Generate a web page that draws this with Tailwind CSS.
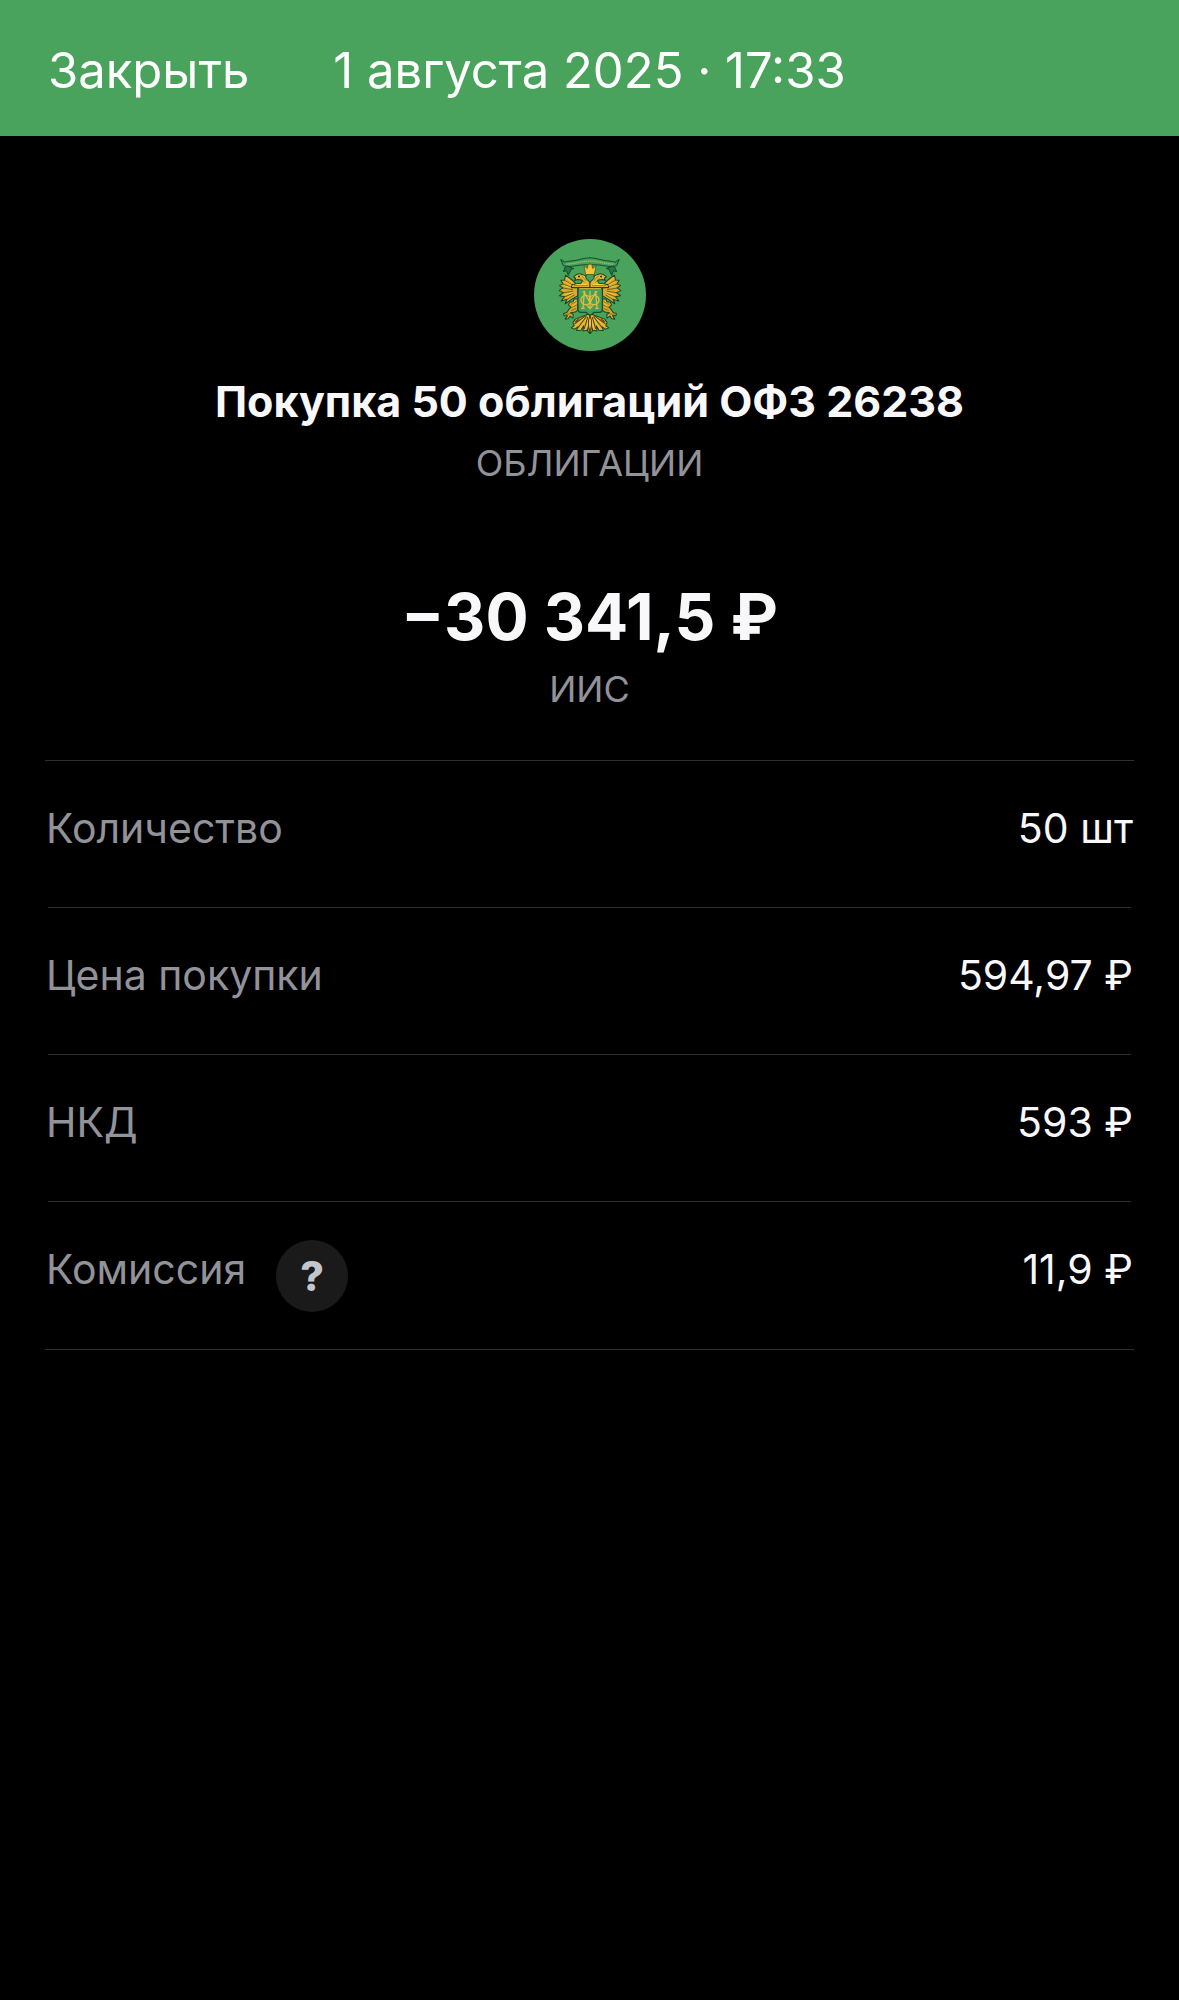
<!DOCTYPE html>
<html lang="ru">
<head>
  <meta charset="UTF-8" />
  <meta name="viewport" content="width=device-width, initial-scale=1.0"/>
  <title>Покупка 50 облигаций ОФЗ 26238</title>
  <script src="https://cdn.jsdelivr.net/npm/@tailwindcss/browser@4"></script>
</head>
<body class="bg-black min-h-screen font-['Inter','Noto_Sans',sans-serif] text-[#f8f8fa]">
  <header class="grid grid-cols-[1fr_auto_1fr] bg-[#4aa35c] px-12 pt-[41px] pb-[35px] text-[49px] leading-[60px] text-white">
    <button type="button" class="justify-self-start cursor-pointer">Закрыть</button>
    <time datetime="2025-08-01T17:33">1 августа 2025 · 17:33</time>
  </header>

  <main class="px-[45px] pt-[103px]">
    <section class="flex flex-col items-center text-center">
      <svg class="size-28" viewBox="28 28 334 334" fill="none" aria-hidden="true">
        <circle cx="195" cy="195" r="167" fill="#4aa35c"/>
        <defs>
          <!-- left half of the eagle, mirrored below -->
          <g id="half" stroke-linejoin="round" stroke-linecap="round">
            <!-- wing -->
            <path d="M158 168 C150 156 138 146 122 136 L119 150 L108 151 L114 161 L104 167 L114 174 L103 182 L116 188 L104 197 L119 200 L109 213 L126 208 L121 221 L140 208 L160 196 Z" fill="#dca926" stroke="#17452c" stroke-width="3"/>
            <path d="M119 151 L144 166 M113 162 L143 173 M113 174 L143 179 M116 188 L145 184 M120 200 L146 190 M127 208 L148 195" stroke="#3c3d16" stroke-width="2"/>
            <path d="M124 143 L150 164 M121 156 L146 169 M119 168 L146 175 M121 194 L146 186 M128 203 L148 190" stroke="#f8d54c" stroke-width="2"/>
            <!-- neck and head -->
            <path d="M195 173 L139 173 L142 164 L168 160 L173 152 C168 148 163 150 158 149 L149 152 L152 145 L146 141 C151 137 156 131 165 132 C176 133 186 142 195 156 Z" fill="#e7b72e" stroke="#17452c" stroke-width="3"/>
            <circle cx="162" cy="140" r="3" fill="#16311c"/>
            <path d="M170 138 L183 152 M167 145 L178 157 M148 167 H188" stroke="#7d6519" stroke-width="2"/>
            <path d="M176 137 L187 150 M153 164 H184" stroke="#ffdf5a" stroke-width="2"/>
            <!-- leg and claw -->
            <path d="M160 206 L147 207 L145 216 L134 216 L131 225 L138 232 L132 238 L126 247 L116 250 L118 257 L128 257 L121 267 L130 266 L136 258 L144 264 L145 253 L137 248 L151 246 L158 240 Z" fill="#d7a525" stroke="#18472b" stroke-width="3"/>
            <path d="M140 222 L154 214 M140 232 L155 225 M140 241 L153 236 M122 253 L136 251" stroke="#6b571b" stroke-width="2"/>
            <path d="M143 219 L153 211 M144 228 L154 220" stroke="#ffd74b" stroke-width="2"/>
            <!-- tail feathers -->
            <path d="M195 250 L178 257 L151 267 L144 278 L148 286 L139 293 L149 297 L159 290 L155 301 L168 300 L176 287 L174 302 L187 300 L191 287 L188 303 L195 310 Z" fill="#e0ad28" stroke="#18472b" stroke-width="3"/>
            <path d="M181 258 L150 280 M184 260 L160 291 M188 262 L178 295 M162 266 L152 274" stroke="#4b4619" stroke-width="3"/>
            <path d="M177 264 L151 289 M183 268 L166 296 M190 269 L184 294" stroke="#ffd447" stroke-width="2"/>
          </g>
          <g id="ribbon" stroke="#164f30" stroke-width="3" stroke-linejoin="round">
            <path d="M121 112 L116 125 L125 123 L130 136 L139 118 L146 116 L128 109 Z" fill="#267a48"/>
            <path d="M108 89 L116 108 L137 110 C158 106 176 104 196 104 V84 C173 84 155 94 132 94 L119 97 Z" fill="#43a15d"/>
          </g>
        </defs>
        <use href="#ribbon"/>
        <use href="#ribbon" transform="translate(390 0) scale(-1 1)"/>
        <path d="M195 86 V102" stroke="#43a15d" stroke-width="6"/>
        <path d="M124 103 C151 102 170 94 195 94 C220 94 239 102 266 103" stroke="#a8bd55" stroke-width="4" stroke-dasharray="4 2"/>
        <use href="#half"/>
        <use href="#half" transform="translate(390 0) scale(-1 1)"/>
        <path d="M183 133 H207 V145 L195 157 L183 145 Z" fill="#43a15d" stroke="#1c5530" stroke-width="3"/>
        <!-- crown -->
        <path d="M182 134 L177 108 L187 116 L190 103 H200 L203 116 L213 108 L208 134 Z" fill="#f2c238" stroke="#45501a" stroke-width="2" stroke-linejoin="round"/>
        <!-- shield with the monogram -->
        <path d="M159 174 H232 V238 Q232 246 222 247 H207 L195 256 L183 247 H169 Q159 246 159 238 Z" fill="#43a15d" stroke="#164f30" stroke-width="4"/>
        <path d="M163 176 H228" stroke="#d9b63a" stroke-width="3"/>
        <g stroke="#e3bb38" stroke-width="4">
          <path d="M178 185 L174 235 M212 185 L216 235 M178 187 L195 218 L212 187 M195 183 V238 M169 235 H179 M211 235 H221 M173 185 H181 M209 185 H217"/>
          <ellipse cx="183" cy="210" rx="15" ry="14"/>
          <ellipse cx="207" cy="210" rx="15" ry="14"/>
          <path d="M187 226 Q195 242 203 226"/>
        </g>
        <path d="M195 258 C189 270 188 285 195 304 C202 285 201 270 195 258 Z" fill="#f2c43a" stroke="#49451a" stroke-width="3"/>
      </svg>
      <h1 class="mt-6 text-[43px] leading-[52px] font-bold">Покупка 50 облигаций ОФЗ 26238</h1>
      <p class="mt-3.5 text-[36px] leading-11 text-[#929299]">ОБЛИГАЦИИ</p>
      <p class="mt-[92px] text-[64px] leading-20 font-bold">−30 341,5 ₽</p>
      <p class="mt-2.5 text-[36px] leading-11 text-[#929299]">ИИС</p>
    </section>

    <dl class="mt-[49px] border-y border-[#303030] text-[41px] leading-[52px]">
      <div class="grid grid-cols-[1fr_auto] px-px pt-[41px] after:col-span-2 after:mx-0.5 after:mt-[53px] after:h-px after:bg-[#303030]">
        <dt class="text-[#929299]">Количество</dt>
        <dd>50 шт</dd>
      </div>
      <div class="grid grid-cols-[1fr_auto] px-px pt-[41px] after:col-span-2 after:mx-0.5 after:mt-[53px] after:h-px after:bg-[#303030]">
        <dt class="text-[#929299]">Цена покупки</dt>
        <dd>594,97 ₽</dd>
      </div>
      <div class="grid grid-cols-[1fr_auto] px-px pt-[41px] after:col-span-2 after:mx-0.5 after:mt-[53px] after:h-px after:bg-[#303030]">
        <dt class="text-[#929299]">НКД</dt>
        <dd>593 ₽</dd>
      </div>
      <div class="grid grid-cols-[1fr_auto] px-px pt-[41px] pb-[54px]">
        <dt class="flex items-start gap-[30px] text-[#929299]">
          Комиссия
          <button type="button" aria-label="Подробнее о комиссии" class="-mt-[3px] -mb-[17px] size-[72px] rounded-full bg-[#1a1a1a] font-extrabold text-[#c3c6cc] cursor-pointer">?</button>
        </dt>
        <dd>11,9 ₽</dd>
      </div>
    </dl>
  </main>
</body>
</html>
